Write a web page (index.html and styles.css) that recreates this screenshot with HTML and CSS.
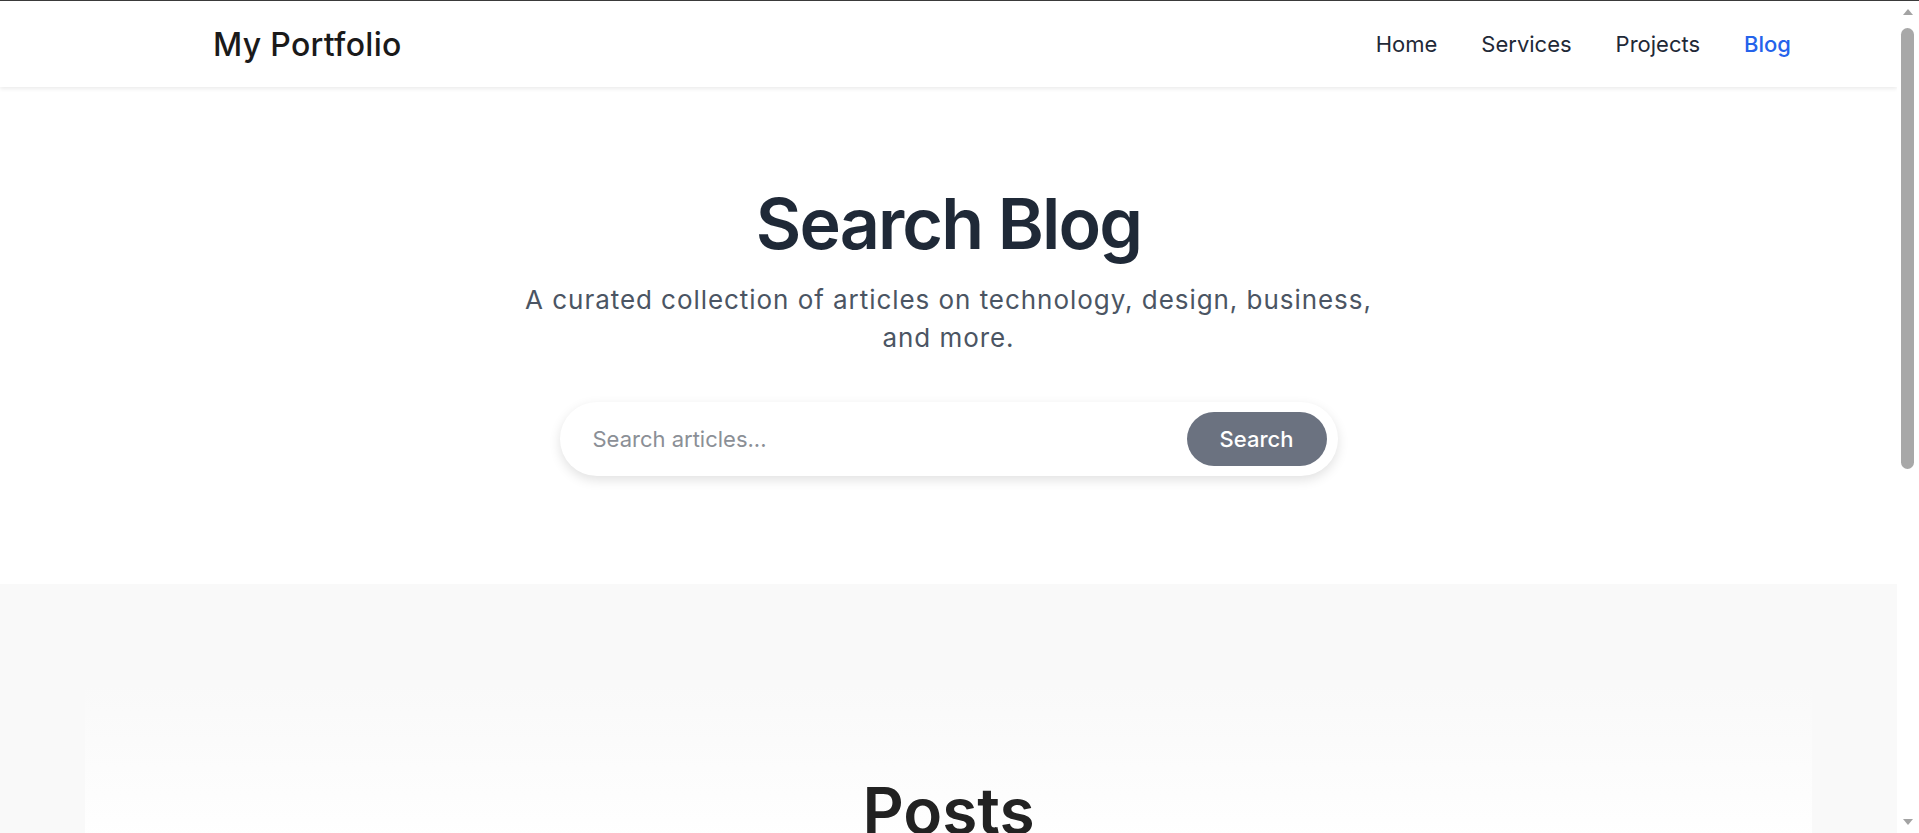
FILE: index.html
```html
<!DOCTYPE html>
<html lang="en">
<head>
<meta charset="utf-8">
<title>Blog - My Portfolio</title>
<link rel="stylesheet" href="styles.css">
</head>
<body>
<div class="page">
  <header class="site-header">
    <div class="logo">My Portfolio</div>
    <nav class="nav">
      <a href="#" class="nav-link">Home</a>
      <a href="#" class="nav-link">Services</a>
      <a href="#" class="nav-link">Projects</a>
      <a href="#" class="nav-link active">Blog</a>
    </nav>
  </header>
  <section class="hero">
    <h1 class="hero-title">Search Blog</h1>
    <p class="hero-sub">A curated collection of articles on technology, design, business, and more.</p>
    <form class="search-bar">
      <input class="search-input" type="text" placeholder="Search articles...">
      <button class="search-btn" type="button">Search</button>
    </form>
  </section>
  <section class="posts-section">
    <div class="posts-panel">
      <h2 class="posts-title">Posts</h2>
    </div>
  </section>
</div>
<div class="scrollbar">
  <div class="sb-arrow sb-up"></div>
  <div class="sb-track"><div class="sb-thumb"></div></div>
  <div class="sb-arrow sb-down"></div>
</div>
</body>
</html>
```

FILE: styles.css
```css
* { box-sizing: border-box; }
html, body { margin: 0; padding: 0; }
body {
  height: 833px;
  overflow: hidden;
  display: flex;
  border-top: 1px solid #3a3a3a;
  font-family: "Inter", "Noto Sans", sans-serif;
  background: #fff;
}
.page {
  flex: 1;
  min-width: 0;
  overflow: hidden;
}
.site-header {
  height: 86px;
  display: flex;
  align-items: center;
  justify-content: space-between;
  padding: 0 106px 0 213px;
  background: #fff;
  box-shadow: 0 2px 4px rgba(0,0,0,0.08);
  position: relative;
  z-index: 1;
}
.logo {
  font-size: 32px;
  font-weight: 500;
  color: #1a1a1a;
  letter-spacing: 0.3px;
}
.nav {
  display: flex;
  gap: 44px;
}
.nav-link {
  font-size: 22px;
  color: #1f2937;
  text-decoration: none;
}
.nav-link.active {
  color: #2563eb;
  font-weight: 500;
}
.hero {
  height: 497px;
  display: flex;
  flex-direction: column;
  align-items: center;
  padding-top: 97px;
}
.hero-title {
  margin: 0;
  font-size: 70px;
  line-height: 80px;
  font-weight: 600;
  color: #1f2937;
  letter-spacing: -1.9px;
}
.hero-sub {
  margin: 17px 0 0;
  max-width: 890px;
  text-align: center;
  font-size: 26px;
  line-height: 38px;
  letter-spacing: 0.95px;
  color: #4b5563;
}
.search-bar {
  margin-top: 45px;
  width: 778px;
  height: 74px;
  padding: 10px 11px;
  display: flex;
  align-items: center;
  background: #fff;
  border-radius: 37px;
  box-shadow: 0 4px 12px rgba(0,0,0,0.12);
}
.search-input {
  flex: 1;
  border: none;
  outline: none;
  background: transparent;
  padding: 0 22px;
  font-family: inherit;
  font-size: 22px;
  color: #374151;
}
.search-input::placeholder { color: #8b8f96; }
.search-btn {
  width: 140px;
  height: 54px;
  border: none;
  border-radius: 27px;
  background: #6b7280;
  color: #fff;
  font-family: inherit;
  font-size: 22px;
  font-weight: 500;
}
.posts-section {
  background: #f9f9f9;
  padding: 101px 85px 0;
  height: 400px;
}
.posts-panel {
  height: 100%;
  background: linear-gradient(to bottom, #f9f9f9 0, #fdfdfd 110px, #fff 160px);
  text-align: center;
  padding-top: 88px;
}
.posts-title {
  margin: 0;
  font-size: 64px;
  line-height: 76px;
  font-weight: 600;
  color: #222;
}
.scrollbar {
  width: 22px;
  flex: none;
  display: flex;
  flex-direction: column;
  background: #fff;
}
.sb-arrow {
  height: 22px;
  display: flex;
  align-items: center;
  justify-content: center;
}
.sb-up::before {
  content: "";
  border-left: 5px solid transparent;
  border-right: 5px solid transparent;
  border-bottom: 6px solid #a3a3a3;
}
.sb-down::before {
  content: "";
  border-left: 5px solid transparent;
  border-right: 5px solid transparent;
  border-top: 6px solid #a3a3a3;
}
.sb-track {
  flex: 1;
  padding: 5px 5px 0 4px;
}
.sb-thumb {
  height: 441px;
  background: #a8a8a8;
  border-radius: 7px;
}
```
